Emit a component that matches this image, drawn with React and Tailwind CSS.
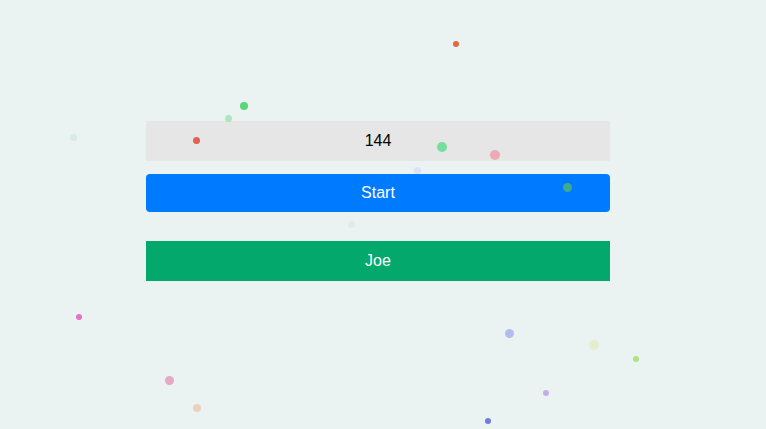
import React from "react";

const dots = [
  { x: 456, y: 44, s: 6, c: "rgba(224,90,40,0.9)" },
  { x: 244, y: 106, s: 8, c: "rgba(60,210,100,0.85)" },
  { x: 228, y: 118, s: 7, c: "rgba(120,220,140,0.55)" },
  { x: 73, y: 137, s: 7, c: "rgba(190,230,215,0.5)" },
  { x: 196, y: 140, s: 7, c: "rgba(225,70,60,0.85)" },
  { x: 442, y: 147, s: 10, c: "rgba(90,220,140,0.8)" },
  { x: 495, y: 155, s: 10, c: "rgba(235,150,165,0.75)" },
  { x: 417, y: 170, s: 7, c: "rgba(200,205,245,0.45)" },
  { x: 567, y: 187, s: 9, c: "rgba(70,175,130,0.9)" },
  { x: 351, y: 224, s: 7, c: "rgba(225,215,240,0.45)" },
  { x: 79, y: 317, s: 6, c: "rgba(225,100,200,0.9)" },
  { x: 509, y: 333, s: 9, c: "rgba(160,170,240,0.75)" },
  { x: 594, y: 345, s: 10, c: "rgba(225,235,190,0.7)" },
  { x: 636, y: 359, s: 6, c: "rgba(160,225,110,0.85)" },
  { x: 169, y: 380, s: 9, c: "rgba(225,150,185,0.8)" },
  { x: 546, y: 393, s: 6, c: "rgba(190,160,235,0.85)" },
  { x: 197, y: 408, s: 8, c: "rgba(235,200,175,0.8)" },
  { x: 488, y: 421, s: 6, c: "rgba(90,100,220,0.85)" },
];

export default function App() {
  return (
    <div
      className="relative w-[766px] h-[429px] overflow-hidden bg-[#ebf3f2]"
      style={{ fontFamily: '"Liberation Sans", Arial, sans-serif' }}
    >
      <div className="flex flex-col pt-[121px] pl-[146px] w-[610px]">
        <div className="h-[40px] bg-[#e6e6e6] flex items-center justify-center text-[16px] text-black">
          144
        </div>
        <div className="mt-[13px] h-[38px] rounded-[4px] bg-[#007bff] flex items-center justify-center text-[16px] text-white">
          Start
        </div>
        <div className="mt-[29px] h-[40px] bg-[#03a96c] flex items-center justify-center text-[16px] text-white">
          Joe
        </div>
      </div>
      {dots.map((d, i) => (
        <div
          key={i}
          className="absolute rounded-full pointer-events-none"
          style={{
            left: d.x - d.s / 2,
            top: d.y - d.s / 2,
            width: d.s,
            height: d.s,
            background: d.c,
          }}
        />
      ))}
    </div>
  );
}
